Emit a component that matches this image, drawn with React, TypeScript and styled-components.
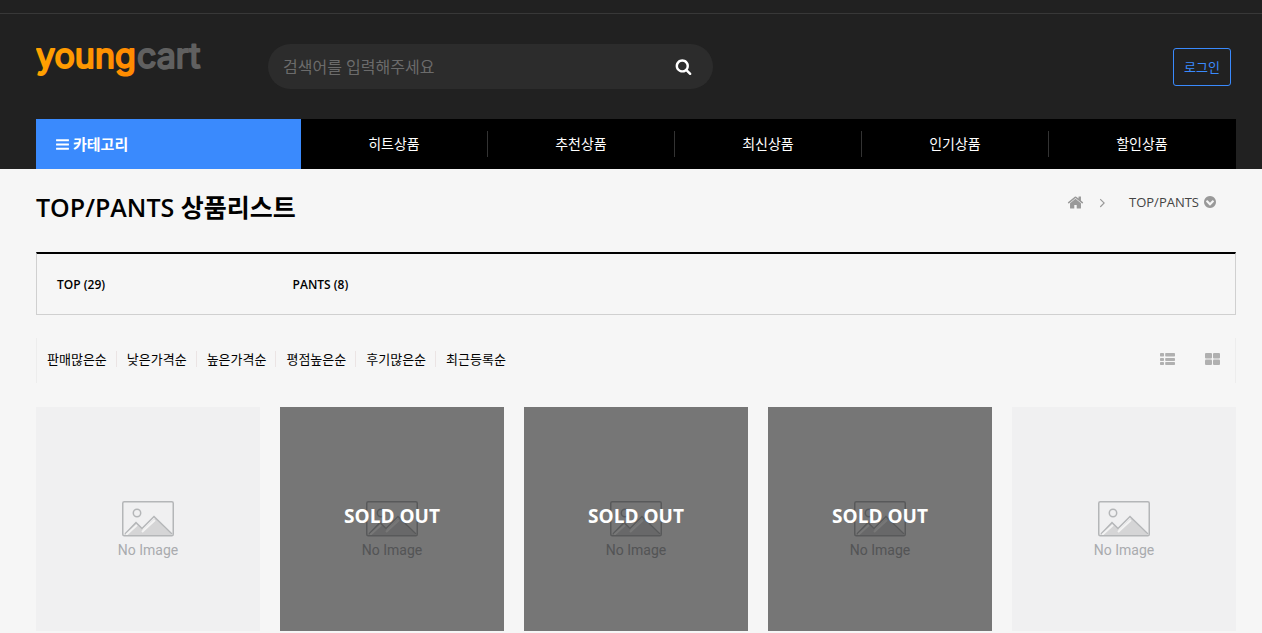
import React from "react";
import styled, { createGlobalStyle } from "styled-components";

const GlobalStyle = createGlobalStyle`
  *, *::before, *::after { box-sizing: border-box; }
  body {
    margin: 0;
    background: #f6f6f6;
    color: #000;
    font-family: "Open Sans", "Noto Sans CJK KR", sans-serif;
    font-size: 13px;
    line-height: 20px;
  }
  h1, ul, ol { margin: 0; padding: 0; }
  ul, ol { list-style: none; }
  a { color: inherit; text-decoration: none; }
  button, input { font: inherit; }
  button { border: 0; padding: 0; background: none; color: inherit; cursor: pointer; }
`;

const Header = styled.header`
  background: #212121;
`;

const TopBar = styled.div`
  height: 14px;
  border-bottom: 1px solid #383838;
`;

const HeaderRow = styled.div`
  display: flex;
  align-items: center;
  height: 105px;
  padding: 0 31px 0 36px;
`;

const LogoLink = styled.a`
  display: flex;
  flex: none;
  width: 232px;
`;

const Search = styled.form`
  display: flex;
  align-items: center;
  width: 445px;
  height: 45px;
  border-radius: 23px;
  background: #2c2c2c;
  overflow: hidden;
`;

const SearchInput = styled.input`
  flex: 1;
  min-width: 0;
  height: 45px;
  padding: 0 15px;
  border: 0;
  outline: 0;
  background: transparent;
  color: #fff;
  font-size: 16px;
  &::placeholder { color: #6b6b6b; opacity: 1; }
`;

const SearchButton = styled.button`
  display: flex;
  align-items: center;
  justify-content: center;
  width: 60px;
  height: 45px;
  color: #fff;
`;

const LoginButton = styled.a`
  margin-left: auto;
  padding: 8px 10px;
  border: 1px solid #3a8afd;
  border-radius: 3px;
  color: #3a8afd;
`;

const Nav = styled.nav`
  display: flex;
  height: 50px;
  margin: 0 26px 0 36px;
  background: #000;
  color: #fff;
`;

const CategoryButton = styled.button`
  display: flex;
  align-items: center;
  gap: 3px;
  width: 265px;
  padding: 0 19px;
  background: #3a8afd;
  color: #fff;
  font-size: 15px;
  font-weight: 700;
`;

const NavList = styled.ul`
  display: grid;
  grid-template-columns: repeat(5, 1fr);
  align-items: center;
  flex: 1;
`;

const NavItem = styled.li`
  border-right: 1px solid #333;
  text-align: center;
  font-size: 14px;
  line-height: 26px;
  &:last-child { border-color: transparent; }
`;

const Main = styled.main`
  padding: 0 26px 0 36px;
`;

const TitleRow = styled.div`
  display: flex;
  justify-content: space-between;
  height: 83px;
  padding-top: 18px;
`;

const Title = styled.h1`
  font-size: 25px;
  line-height: 40px;
  font-weight: 600;
`;

const Crumbs = styled.nav`
  display: flex;
  align-items: center;
  height: 30px;
  padding-right: 19px;
  color: #999;
`;

const CrumbLink = styled.a`
  display: flex;
`;

const CrumbArrow = styled.span`
  display: flex;
  margin: 0 19px 0 11px;
`;

const CrumbToggle = styled.button`
  display: flex;
  align-items: center;
  gap: 4px;
  color: #999;
`;

const CrumbText = styled.span`
  color: #444;
`;

const SubCategories = styled.ul`
  display: grid;
  grid-template-columns: repeat(5, 1fr);
  padding: 21px 0 19px 20px;
  border: 1px solid #d0d0d0;
  border-top: 2px solid #000;
  font-size: 12px;
  font-weight: 600;
`;

const SortBar = styled.div`
  display: flex;
  align-items: center;
  justify-content: space-between;
  height: 45px;
  margin: 23px 0 24px;
  padding-bottom: 4px;
  border: solid #ededed;
  border-width: 0 1px;
`;

const SortList = styled.ul`
  display: flex;
`;

const SortItem = styled.li`
  padding: 0 9px 0 10px;
  border-right: 1px solid #ebe4e4;
  line-height: 16px;
  &:last-child { border: 0; }
`;

const ViewButtons = styled.div`
  display: flex;
  color: #b0b0b0;
`;

const ViewButton = styled.button`
  display: flex;
  align-items: center;
  justify-content: center;
  width: 45px;
  height: 40px;
`;

const Products = styled.ul`
  display: grid;
  grid-template-columns: repeat(5, 1fr);
  gap: 20px;
`;

const Product = styled.li`
  position: relative;
  aspect-ratio: 1;
`;

const ProductLink = styled.a`
  display: flex;
  flex-direction: column;
  align-items: center;
  height: 100%;
  padding-top: 94px;
  background: #f0f0f1;
  color: #a9abae;
  font-family: Roboto, sans-serif;
  font-size: 14px;
  line-height: 26px;
`;

const SoldOut = styled.span`
  position: absolute;
  inset: 0;
  display: flex;
  align-items: center;
  justify-content: center;
  padding-bottom: 7px;
  background: rgba(0, 0, 0, 0.51);
  color: #fff;
  font-size: 19px;
  font-weight: 700;
  pointer-events: none;
`;

const iconPaths = {
  search:
    "M1216 832q0-185-131.5-316.5t-316.5-131.5-316.5 131.5-131.5 316.5 131.5 316.5 316.5 131.5 316.5-131.5 131.5-316.5zm512 832q0 52-38 90t-90 38q-54 0-90-38l-343-342q-179 124-399 124-143 0-273.5-55.5t-225-150-150-225-55.5-273.5 55.5-273.5 150-225 225-150 273.5-55.5 273.5 55.5 225 150 150 225 55.5 273.5q0 220-124 399l343 343q37 37 37 90z",
  home:
    "M1472 992v480q0 26-19 45t-45 19h-384v-384h-256v384h-384q-26 0-45-19t-19-45v-480q0-1 .5-3t.5-3l575-474 575 474q1 2 1 6zm223-69l-62 74q-8 9-21 11h-3q-13 0-21-7l-692-577-692 577q-12 8-24 7-13-2-21-11l-62-74q-8-10-7-23.5t11-21.5l719-599q32-26 76-26t76 26l244 204v-195q0-14 9-23t23-9h192q14 0 23 9t9 23v408l219 182q10 8 11 21.5t-7 23.5z",
  bars:
    "M1664 1344v128q0 26-19 45t-45 19h-1408q-26 0-45-19t-19-45v-128q0-26 19-45t45-19h1408q26 0 45 19t19 45zm0-512v128q0 26-19 45t-45 19h-1408q-26 0-45-19t-19-45v-128q0-26 19-45t45-19h1408q26 0 45 19t19 45zm0-512v128q0 26-19 45t-45 19h-1408q-26 0-45-19t-19-45v-128q0-26 19-45t45-19h1408q26 0 45 19t19 45z",
  angle:
    "M1171 960q0 13-10 23l-466 466q-10 10-23 10t-23-10l-50-50q-10-10-10-23t10-23l393-393-393-393q-10-10-10-23t10-23l50-50q10-10 23-10t23 10l466 466q10 10 10 23z",
  down:
    "M941 1331l454-454q19-19 19-45t-19-45l-102-102q-19-19-45-19t-45 19l-307 307-307-307q-19-19-45-19t-45 19l-102 102q-19 19-19 45t19 45l454 454q19 19 45 19t45-19zm723-435q0 209-103 385.5t-279.5 279.5-385.5 103-385.5-103-279.5-279.5-103-385.5 103-385.5 279.5-279.5 385.5-103 385.5 103 279.5 279.5 103 385.5z",
};

function Icon({ name, size }: { name: keyof typeof iconPaths; size: number }) {
  return (
    <svg width={size} height={size} viewBox="0 0 1792 1792" fill="currentColor" aria-hidden="true">
      <path d={iconPaths[name]} />
    </svg>
  );
}

function Logo() {
  return (
    <svg width="172" height="72" viewBox="0 0 172 72" role="img" aria-label="youngcart">
      <defs>
        <linearGradient id="logoOrange" x1="0" x2="1" y1="0" y2="0">
          <stop offset="0" stopColor="#ffa200" />
          <stop offset="1" stopColor="#ff8a00" />
        </linearGradient>
      </defs>
      <g fontFamily="Inter, sans-serif" fontSize="34" fontWeight="400" strokeLinejoin="round" strokeWidth="2">
        <text x="0" y="37" fill="url(#logoOrange)" stroke="url(#logoOrange)">young</text>
        <text x="101" y="37" fill="#606060" stroke="#606060">cart</text>
      </g>
    </svg>
  );
}

function ListIcon() {
  return (
    <svg width="15" height="12" viewBox="0 0 15 12" fill="currentColor" aria-hidden="true">
      {[0, 5, 9].map((y) => (
        <React.Fragment key={y}>
          <rect x="0" y={y} width="4" height={y ? 3 : 3.4} rx="0.7" />
          <rect x="5.2" y={y} width="9.8" height={y ? 3 : 3.4} rx="0.7" />
        </React.Fragment>
      ))}
    </svg>
  );
}

function GridIcon() {
  return (
    <svg width="15" height="12" viewBox="0 0 15 12" fill="currentColor" aria-hidden="true">
      <rect width="7" height="5.5" rx="1" />
      <rect x="8" width="7" height="5.5" rx="1" />
      <rect y="6.5" width="7" height="5.5" rx="1" />
      <rect x="8" y="6.5" width="7" height="5.5" rx="1" />
    </svg>
  );
}

function NoImageIcon() {
  return (
    <svg width="52" height="36" viewBox="0 0 52 36" fill="none" stroke="#b4b6b8" aria-hidden="true">
      <path d="M2 34 14 21.500 21 29 33 17 50 34Z" fill="#d5d5d6" stroke="none" />
      <path d="M3 33 14 21.500 20 27.500 32 15.500 50 33" strokeWidth="1.500" />
      <path d="M4 34 15 24M20 31 33 19" stroke="#f3f3f3" strokeWidth="2" />
      <circle cx="15" cy="12" r="3.700" strokeWidth="1.500" />
      <rect x="0.750" y="0.750" width="50.500" height="34" rx="1.500" strokeWidth="1.500" />
    </svg>
  );
}

const navItems = ["히트상품", "추천상품", "최신상품", "인기상품", "할인상품"];
const sortItems = ["판매많은순", "낮은가격순", "높은가격순", "평점높은순", "후기많은순", "최근등록순"];
const products = [
  { id: 1, soldOut: false },
  { id: 2, soldOut: true },
  { id: 3, soldOut: true },
  { id: 4, soldOut: true },
  { id: 5, soldOut: false },
];

export default function App() {
  return (
    <>
      <GlobalStyle />
      <Header>
        <TopBar />
        <HeaderRow>
          <LogoLink href="#"><Logo /></LogoLink>
          <Search onSubmit={(e) => e.preventDefault()}>
            <SearchInput type="text" aria-label="검색어" placeholder="검색어를 입력해주세요" />
            <SearchButton type="submit" aria-label="검색"><Icon name="search" size={17} /></SearchButton>
          </Search>
          <LoginButton href="#">로그인</LoginButton>
        </HeaderRow>
        <Nav>
          <CategoryButton type="button"><Icon name="bars" size={15} />카테고리</CategoryButton>
          <NavList>
            {navItems.map((item) => (
              <NavItem key={item}><a href="#">{item}</a></NavItem>
            ))}
          </NavList>
        </Nav>
      </Header>
      <Main>
        <TitleRow>
          <Title>TOP/PANTS 상품리스트</Title>
          <Crumbs>
            <CrumbLink href="#" aria-label="홈"><Icon name="home" size={17} /></CrumbLink>
            <CrumbArrow><Icon name="angle" size={15} /></CrumbArrow>
            <CrumbToggle type="button"><CrumbText>TOP/PANTS</CrumbText><Icon name="down" size={14} /></CrumbToggle>
          </Crumbs>
        </TitleRow>
        <SubCategories>
          <li><a href="#">TOP (29)</a></li>
          <li><a href="#">PANTS (8)</a></li>
        </SubCategories>
        <SortBar>
          <SortList>
            {sortItems.map((item) => (
              <SortItem key={item}><a href="#">{item}</a></SortItem>
            ))}
          </SortList>
          <ViewButtons>
            <ViewButton type="button" aria-label="리스트뷰"><ListIcon /></ViewButton>
            <ViewButton type="button" aria-label="갤러리뷰"><GridIcon /></ViewButton>
          </ViewButtons>
        </SortBar>
        <Products>
          {products.map((product) => (
            <Product key={product.id}>
              <ProductLink href="#"><NoImageIcon />No Image</ProductLink>
              {product.soldOut && <SoldOut>SOLD OUT</SoldOut>}
            </Product>
          ))}
        </Products>
      </Main>
    </>
  );
}
